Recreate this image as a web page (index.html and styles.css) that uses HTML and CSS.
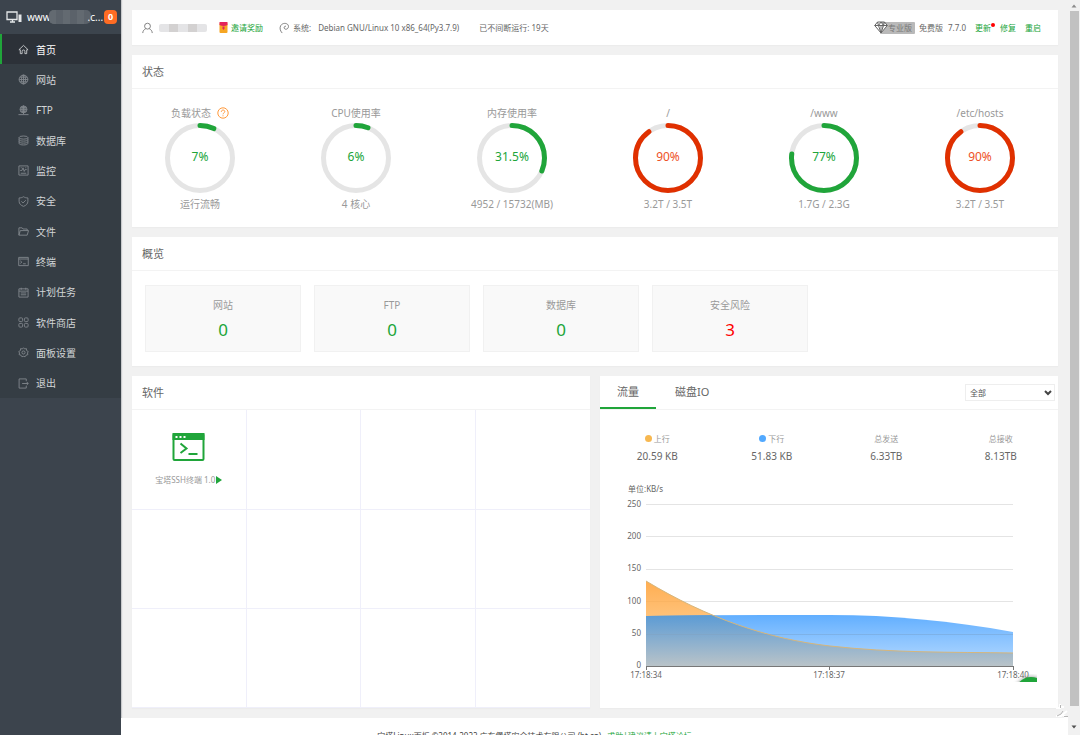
FILE: index.html
```html
<!DOCTYPE html>
<html lang="zh-CN">
<head>
<meta charset="utf-8">
<title>宝塔Linux面板</title>
<link rel="stylesheet" href="styles.css">
</head>
<body>
<div class="app">
  <aside class="sidebar">
    <div class="host">
      <svg class="host-icon" viewBox="0 0 16 12"><path d="M1 1h10v7.500H1zM4 11h5M6.500 8.500V11" fill="none" stroke="#e4e7e9" stroke-width="1.300"/><path d="M12.500 3.500h3V11h-3z" fill="#e4e7e9"/></svg>
      <span class="host-name">www<span class="mask mask-dark"><i></i><i></i><i></i><i></i><i></i><i></i></span>.c...</span>
      <span class="badge">0</span>
    </div>
    <nav class="nav">
      <a class="nav-item active" href="#"><svg viewBox="0 0 12 12"><path d="M1 6.300L6 1.500l5 4.800H9.500v4.200h-2V8a1.500 1.500 0 0 0-3 0v2.500h-2V6.300z"/></svg>首页</a>
      <a class="nav-item" href="#"><svg viewBox="0 0 12 12"><circle cx="6" cy="6" r="4.800"/><ellipse cx="6" cy="6" rx="2.200" ry="4.800"/><path d="M6 1.200v9.600M1.200 6h9.600M2 3.500h8M2 8.500h8"/></svg>网站</a>
      <a class="nav-item" href="#"><svg viewBox="0 0 12 12"><circle cx="6" cy="4.800" r="3.800"/><ellipse cx="6" cy="4.800" rx="1.700" ry="3.800"/><path d="M2.200 4.800h7.600M6 1v9M.5 10.500h11M3 3h6M3 6.800h6"/></svg>FTP</a>
      <a class="nav-item" href="#"><svg viewBox="0 0 12 12"><ellipse cx="6" cy="2.800" rx="4.800" ry="1.700"/><path d="M1.200 2.800v6.400c0 2.200 9.600 2.200 9.600 0V2.800M1.200 5c0 2.200 9.600 2.200 9.600 0M1.200 7.200c0 2.200 9.600 2.200 9.600 0"/></svg>数据库</a>
      <a class="nav-item" href="#"><svg viewBox="0 0 12 12"><path d="M1 1h10v10H1zM3 9h6M2.500 6h1.700l1.300-3 1.300 4 1-2h1.700M3 3h1M8 3h1"/></svg>监控</a>
      <a class="nav-item" href="#"><svg viewBox="0 0 12 12"><path d="M6 .8c1.500 1 3.200 1.300 4.800 1.300v3.700c0 2.700-2 4.500-4.800 5.500-2.800-1-4.800-2.800-4.800-5.500V2.100C2.800 2.100 4.500 1.800 6 .8zM3.700 5.800l1.800 1.800 3-3"/></svg>安全</a>
      <a class="nav-item" href="#"><svg viewBox="0 0 12 12"><path d="M1 10V2h3.500l1 1.300H10V5M1 10l1.500-5h9L10 10z"/></svg>文件</a>
      <a class="nav-item" href="#"><svg viewBox="0 0 12 12"><path d="M.8 1.500h10.400v9H.8zM.8 3.300h10.400M2.500 5.300l1.700 1.400-1.700 1.400M5.500 8.500h3"/></svg>终端</a>
      <a class="nav-item" href="#"><svg viewBox="0 0 12 12"><path d="M1 2h10v9H1zM1 4.500h10M3.500.8V3M8.500.8V3M3 6.500h6M3 8.500h6"/></svg>计划任务</a>
      <a class="nav-item" href="#"><svg viewBox="0 0 12 12"><rect x="1" y="1" width="4" height="4" rx="1"/><rect x="7" y="1" width="4" height="4" rx="1"/><rect x="1" y="7" width="4" height="4" rx="1"/><rect x="7" y="7" width="4" height="4" rx="1"/></svg>软件商店</a>
      <a class="nav-item" href="#"><svg viewBox="0 0 12 12"><circle cx="6" cy="6" r="1.700"/><path d="M6 .8l1.200 1.300 2-.3.100 2L11.200 5l-.9 1.500.5 1.800-2 .6-1 1.700L6 10.200l-1.800.4-1-1.700-2-.6.5-1.800L.8 5l1.900-1.200.1-2 2 .3z"/></svg>面板设置</a>
      <a class="nav-item" href="#"><svg viewBox="0 0 12 12"><path d="M9 3.500V1H1.200v10H9V8.500M4.500 6H11M9.500 4.300L11.200 6 9.500 7.700"/></svg>退出</a>
    </nav>
  </aside>

  <main class="main">
    <header class="card topbar">
      <svg class="user-icon" viewBox="0 0 12 12"><circle cx="6" cy="4" r="3.200"/><path d="M.8 11.500c.3-2.700 1.600-4 3.200-4.600M11.200 11.500c-.3-2.700-1.600-4-3.200-4.600"/></svg>
      <span class="mask mask-light"><i></i><i></i><i></i><i></i><i></i></span>
      <a class="invite" href="#"><svg viewBox="0 0 9 11"><rect x=".5" y="1" width="8" height="10" rx="1" fill="#f6a623"/><path d="M.5 0h8v3q-4 2-8 0z" fill="#e3245b"/><path d="M3.500 4.500h2v2L4.500 8l-1-1.500z" fill="#e3245b"/></svg>邀请奖励</a>
      <svg class="debian" viewBox="0 0 12 12"><path d="M3.500 11.500C1 9 .5 5.500 2 3.200 4 .3 8.500.3 10 2.800c1 2-.2 4.200-2 4.500-1.700.3-2.800-1-2.300-2.300.3-.8 1-1.200 1.800-1"/></svg>
      <span class="sys-label">系统:</span>
      <span class="sys-name">Debian GNU/Linux 10 x86_64(Py3.7.9)</span>
      <span class="uptime">已不间断运行: 19天</span>
      <div class="version">
        <span class="pro"><svg viewBox="0 0 14 13"><path d="M3.500 1h7L13.300 4.500 7 12 .7 4.500zM.7 4.500h12.600M4.500 4.500L7 12l2.500-7.500M3.500 1l1 3.500L7 1l2.500 3.500 1-3.500"/></svg><b>专业版</b></span>
        <span class="edition">免费版</span><span>7.7.0</span>
        <a class="update" href="#">更新</a><a href="#">修复</a><a href="#">重启</a>
      </div>
    </header>

    <section class="card">
      <h2 class="card-title">状态</h2>
      <div class="gauges">
        <div class="gauge"><div class="g-name">负载状态 <svg class="help" viewBox="0 0 12 12"><circle cx="6" cy="6" r="5.200"/><path d="M4.300 4.800c0-2.400 3.500-2.200 3.500-.2 0 1.200-1.800 1.300-1.800 2.700M6 8.300v1"/></svg></div>
          <div class="ring"><svg viewBox="0 0 72 72"><circle class="track" cx="36" cy="36" r="32.500"/><circle class="arc" cx="36" cy="36" r="32.500" pathLength="100" stroke-dasharray="7 100"/></svg><span>7%</span></div><div class="g-info">运行流畅</div></div>
        <div class="gauge"><div class="g-name">CPU使用率</div>
          <div class="ring"><svg viewBox="0 0 72 72"><circle class="track" cx="36" cy="36" r="32.500"/><circle class="arc" cx="36" cy="36" r="32.500" pathLength="100" stroke-dasharray="6 100"/></svg><span>6%</span></div><div class="g-info">4 核心</div></div>
        <div class="gauge"><div class="g-name">内存使用率</div>
          <div class="ring"><svg viewBox="0 0 72 72"><circle class="track" cx="36" cy="36" r="32.500"/><circle class="arc" cx="36" cy="36" r="32.500" pathLength="100" stroke-dasharray="31.500 100"/></svg><span>31.5%</span></div><div class="g-info">4952 / 15732(MB)</div></div>
        <div class="gauge danger"><div class="g-name">/</div>
          <div class="ring"><svg viewBox="0 0 72 72"><circle class="track" cx="36" cy="36" r="32.500"/><circle class="arc" cx="36" cy="36" r="32.500" pathLength="100" stroke-dasharray="90 100"/></svg><span>90%</span></div><div class="g-info">3.2T / 3.5T</div></div>
        <div class="gauge"><div class="g-name">/www</div>
          <div class="ring"><svg viewBox="0 0 72 72"><circle class="track" cx="36" cy="36" r="32.500"/><circle class="arc" cx="36" cy="36" r="32.500" pathLength="100" stroke-dasharray="77 100"/></svg><span>77%</span></div><div class="g-info">1.7G / 2.3G</div></div>
        <div class="gauge danger"><div class="g-name">/etc/hosts</div>
          <div class="ring"><svg viewBox="0 0 72 72"><circle class="track" cx="36" cy="36" r="32.500"/><circle class="arc" cx="36" cy="36" r="32.500" pathLength="100" stroke-dasharray="90 100"/></svg><span>90%</span></div><div class="g-info">3.2T / 3.5T</div></div>
      </div>
    </section>

    <section class="card">
      <h2 class="card-title">概览</h2>
      <div class="overview">
        <div class="tile"><span>网站</span><a href="#">0</a></div>
        <div class="tile"><span>FTP</span><a href="#">0</a></div>
        <div class="tile"><span>数据库</span><a href="#">0</a></div>
        <div class="tile"><span>安全风险</span><a class="risk" href="#">3</a></div>
      </div>
    </section>

    <div class="columns">
      <section class="card">
        <h2 class="card-title">软件</h2>
        <div class="soft">
          <div class="soft-cell">
            <svg class="terminal" viewBox="0 0 32 28"><rect x="1" y="1" width="30" height="26" rx="1" fill="#fff" stroke="#20a53a" stroke-width="2"/><path d="M0 0h32v7H0z" fill="#20a53a"/><path d="M3 3h2v2H3zM7 3h2v2H7zM11 3h2v2h-2z" fill="#fff"/><path d="M8 10.500l6 5-6 4.500M16 21h9" fill="none" stroke="#20a53a" stroke-width="2"/></svg>
            <div class="soft-name">宝塔SSH终端 1.0<svg viewBox="0 0 6 8"><path d="M0 0l6 4-6 4z" fill="#20a53a"/></svg></div>
          </div>
          <div class="soft-cell"></div><div class="soft-cell"></div><div class="soft-cell"></div>
          <div class="soft-cell"></div><div class="soft-cell"></div><div class="soft-cell"></div><div class="soft-cell"></div>
          <div class="soft-cell"></div><div class="soft-cell"></div><div class="soft-cell"></div><div class="soft-cell"></div>
        </div>
      </section>

      <section class="card traffic">
        <div class="tabs">
          <button class="tab on" type="button">流量</button><button class="tab" type="button">磁盘IO</button>
          <div class="picker"><select aria-label="网卡"><option>全部</option></select><svg viewBox="0 0 8 6"><path d="M1 1l3 3 3-3"/></svg></div>
        </div>
        <div class="stats">
          <div><span><i class="dot up"></i>上行</span><b>20.59 KB</b></div>
          <div><span><i class="dot down"></i>下行</span><b>51.83 KB</b></div>
          <div><span>总发送</span><b>6.33TB</b></div>
          <div><span>总接收</span><b>8.13TB</b></div>
        </div>
        <svg class="chart" viewBox="0 0 458 212">
          <defs>
            <linearGradient id="orange" x1="0" y1="0" x2="0" y2="1"><stop offset="0" stop-color="#ff9f32" stop-opacity=".85"/><stop offset="1" stop-color="#ffc57a" stop-opacity=".65"/></linearGradient>
            <linearGradient id="blue" x1="0" y1="0" x2="0" y2="1"><stop offset="0" stop-color="#2f95ff" stop-opacity=".76"/><stop offset="1" stop-color="#8cc4ff" stop-opacity=".65"/></linearGradient>
            <linearGradient id="overlap" x1="0" y1="0" x2="0" y2="1"><stop offset="0" stop-color="#5b9bd5"/><stop offset="1" stop-color="#b9c3c8"/></linearGradient>
            <clipPath id="upClip"><path d="M46 101C107 138 168 159 230 166S352 172 413 173V186H46z"/></clipPath>
          </defs>
          <path class="grid" d="M46 24.500H413M46 56.500H413M46 89.500H413M46 121.500H413M46 154.500H413"/>
          <path d="M46 101C107 138 168 159 230 166S352 172 413 173V186H46z" fill="url(#orange)"/>
          <path d="M46 136C107 135 168 135 230 135S352 141 413 152V186H46z" fill="url(#blue)"/>
          <path d="M46 136C107 135 168 135 230 135S352 141 413 152V186H46z" fill="url(#overlap)" clip-path="url(#upClip)"/>
          <path d="M46 101C107 138 168 159 230 166S352 172 413 173" fill="none" stroke="#d6b67c"/>
          <path class="grid faint" d="M46 154.500H413"/>
          <path class="axis" d="M46 186.500H413M46.500 186V190M229.500 186V190M413.500 186V190"/>
          <text x="28" y="12">单位:KB/s</text>
          <g text-anchor="end"><text x="41" y="27">250</text><text x="41" y="59">200</text><text x="41" y="91">150</text><text x="41" y="124">100</text><text x="41" y="156">50</text><text x="41" y="188">0</text></g>
          <g text-anchor="middle"><text x="46" y="198">17:18:34</text><text x="229" y="198">17:18:37</text><text x="413" y="198">17:18:40</text></g>
        </svg>
        <span class="float-ball"></span>
      </section>
    </div>

    <footer class="footer">宝塔Linux面板 ©2014-2022 广东堡塔安全技术有限公司 (bt.cn) <a href="#">求助|建议请上宝塔论坛</a></footer>
    <svg class="scribble" viewBox="0 0 12 14"><path d="M4 0v4H0M5 3h3M11 7L5 12H0M7 9l2 4h3" stroke="#fff" stroke-width="2"/><path d="M4.500 1v3M1 12l4-2 2-3M8 12.500h4" stroke="#b5b5b5"/></svg>
  </main>

  <div class="scrollbar"><svg viewBox="0 0 12 10"><path d="M3.500 7L6 4l2.500 3z" fill="#8b8b8b"/></svg><div class="thumb"></div><svg viewBox="0 0 12 10"><path d="M3.500 3L6 6l2.500-3z" fill="#505050"/></svg></div>
</div>
</body>
</html>
```
FILE: styles.css
```css
* { box-sizing: border-box; }
body {
  margin: 0;
  font-family: "Noto Sans", "Noto Sans CJK SC", sans-serif;
  font-size: 10px;
  line-height: 14px;
  color: #666;
  background: #f1f1f1;
}
a { color: #20a53a; text-decoration: none; }
svg { display: block; flex: none; }
.app { display: flex; height: 100vh; overflow: hidden; }

.sidebar { flex: none; width: 121px; background: #3c444d; box-shadow: 1px 0 1px #c8cacc; }
.host { display: flex; align-items: center; height: 34px; padding: 0 4px 0 6px; color: #fff; }
.host-icon { width: 16px; height: 12px; margin-right: 5px; }
.host-name { display: flex; align-items: center; flex: 1; white-space: nowrap; }
.badge { width: 13px; height: 14px; border-radius: 4px; background: #ff6c24; font-size: 9px; font-weight: 700; text-align: center; }
.mask { display: flex; overflow: hidden; flex: none; }
.mask i { flex: 1; }
.mask-dark { width: 42px; height: 14px; margin: 0 -3px 0 -2px; border-radius: 5px; background: #5b626a; }
.mask-dark i:nth-child(odd) { background: #636a71; }
.mask-light { width: 48px; height: 8px; margin: 0 12px 0 6px; border-radius: 2px; background: #e4e4e6; }
.mask-light i:nth-child(2), .mask-light i:nth-child(4) { background: #d3d1d1; }
.nav { display: grid; grid-auto-rows: 1fr; height: 364px; background: #353d44; }
.nav-item { display: flex; align-items: center; gap: 7px; padding: 1px 0 0 18px; color: #d2d5d7; }
.nav-item svg { width: 11px; height: 11px; fill: none; stroke: #81878c; stroke-width: 1; }
.nav-item.active { padding-left: 16px; border-left: 2px solid #20a53a; background: #2c3138; color: #fff; }
.nav-item.active svg { stroke: #c9ccce; }

.main { position: relative; flex: 1; min-width: 0; display: flex; flex-direction: column; gap: 10px; padding: 10px 10px 0 11px; overflow: hidden; }
.card { flex: none; background: #fff; box-shadow: 0 1px 1px #ececec; }
.card-title { height: 34px; margin: 0; padding-left: 10px; border-bottom: 1px solid #f3f3f3; font-size: 11px; line-height: 34px; font-weight: 400; color: #666; }

.topbar { display: flex; align-items: center; height: 35px; padding: 0 17px 0 10px; font-size: 8px; white-space: nowrap; }
.user-icon { width: 11px; height: 12px; fill: none; stroke: #777; }
.invite { display: flex; align-items: center; gap: 3px; margin-right: 16px; }
.invite svg { width: 9px; height: 11px; }
.debian { width: 11px; height: 12px; margin-right: 3px; fill: none; stroke: #777; }
.sys-label { margin-right: 7px; }
.sys-name { margin-right: 20px; }
.version { display: flex; align-items: center; gap: 9px; margin-left: auto; }
.pro { display: flex; align-items: center; margin-right: -5px; }
.pro svg { position: relative; width: 14px; height: 13px; margin-right: -8px; fill: #fff; stroke: #666; stroke-width: 1; }
.pro b { height: 12px; padding: 0 3px 0 8px; border-radius: 1px; background: #b9b9b9; line-height: 12px; font-weight: 400; color: #777; }
.edition { margin-right: -4px; }
.update { position: relative; }
.update::after { content: ""; position: absolute; top: 2px; right: -4px; width: 4px; height: 4px; border-radius: 50%; background: #f00; }

.gauges { display: flex; justify-content: space-between; padding: 17px 28px 15px 18px; color: #999; text-align: center; }
.gauge { width: 100px; white-space: nowrap; }
.g-name { display: flex; align-items: center; justify-content: center; gap: 6px; }
.help { width: 12px; height: 12px; fill: none; stroke: #ff9a3c; }
.ring { position: relative; width: 72px; margin: 2px auto; }
.ring svg { width: 72px; height: 72px; fill: none; transform: rotate(-90deg); }
.ring span { position: absolute; inset: 0; font-size: 12px; line-height: 70px; color: #20a53a; }
.track { stroke: #e5e5e5; stroke-width: 5; }
.arc { stroke: #20a53a; stroke-width: 5; stroke-linecap: round; }
.danger .arc { stroke: #e03000; }
.danger .ring span { color: #ee5126; }
.g-info { height: 16px; line-height: 16px; }

.overview { display: grid; grid-template-columns: repeat(4, minmax(0, 156px)); gap: 13px; padding: 14px 13px; }
.tile { display: flex; flex-direction: column; align-items: center; gap: 6px; height: 67px; padding-top: 12px; border: 1px solid #f1f1f1; background: #f9f9f9; color: #999; }
.tile a { font-size: 17px; line-height: 24px; }
.tile .risk { color: #f00; }

.columns { display: grid; grid-template-columns: 1fr 1fr; gap: 10px; flex: none; }
.soft { display: grid; grid-template-columns: repeat(4, 1fr); grid-template-rows: 100px 99px 99px; }
.soft-cell { display: flex; flex-direction: column; align-items: center; gap: 12px; padding-top: 23px; border-right: 1px solid #efeffa; border-bottom: 1px solid #efeffa; }
.soft-cell:nth-child(4n) { border-right: 0; }
.terminal { width: 33px; height: 28px; }
.soft-name { display: flex; align-items: center; gap: 1px; font-size: 8px; color: #999; }
.soft-name svg { width: 6px; height: 8px; }

.traffic { position: relative; }
.tabs { display: flex; height: 34px; padding-right: 3px; border-bottom: 1px solid #f3f3f3; }
.tab { padding: 0 17px; border: 0; border-bottom: 2px solid transparent; background: none; font: inherit; font-size: 11px; color: #666; }
.tab.on { border-color: #20a53a; }
.tab + .tab { padding: 0 19px; }
.picker { position: relative; width: 90px; height: 17px; margin: 8px 0 0 auto; }
.picker select { width: 100%; height: 100%; padding: 0 4px; border: 1px solid #eee; border-radius: 0; background: #fff; font: inherit; font-size: 8px; line-height: 15px; color: #555; appearance: none; }
.picker svg { position: absolute; top: 6px; right: 3px; width: 8px; height: 6px; fill: none; stroke: #444; stroke-width: 2; pointer-events: none; }
.stats { display: grid; grid-template-columns: repeat(4, 1fr); padding-top: 22px; text-align: center; }
.stats div { display: flex; flex-direction: column; gap: 3px; }
.stats span { font-size: 8px; color: #999; }
.stats b { font-weight: 400; }
.dot { display: inline-block; width: 7px; height: 7px; margin-right: 2px; border-radius: 50%; }
.up { background: #f7b851; }
.down { background: #52a9ff; }
.chart { width: 100%; height: auto; margin: 17px 0 16px; font-size: 8px; fill: #666; }
.grid { stroke: #e4e4e4; }
.faint { stroke: #8898a8; stroke-opacity: .2; }
.axis { stroke: #777; }
.float-ball { position: absolute; right: 21px; bottom: 26px; width: 24px; height: 8px; overflow: hidden; }
.float-ball::after { content: ""; position: absolute; top: 3px; left: 2px; width: 32px; height: 32px; border-radius: 50%; background: #20a53a; box-shadow: 0 0 4px #888; }

.footer { flex: none; margin: 0 -10px 0 -11px; padding: 11px 120px 20px 0; background: #fff; font-size: 8px; text-align: center; color: #444; }
.footer a { margin-left: 4px; }
.scribble { position: absolute; right: 0; bottom: 17px; width: 12px; height: 14px; fill: none; }

.scrollbar { flex: none; display: flex; flex-direction: column; width: 12px; padding-bottom: 2px; background: #f1f1f1; }
.scrollbar svg { width: 12px; height: 11px; }
.thumb { flex: 1; width: 9px; margin: 0 auto 16px; background: #c1c1c1; }
```
